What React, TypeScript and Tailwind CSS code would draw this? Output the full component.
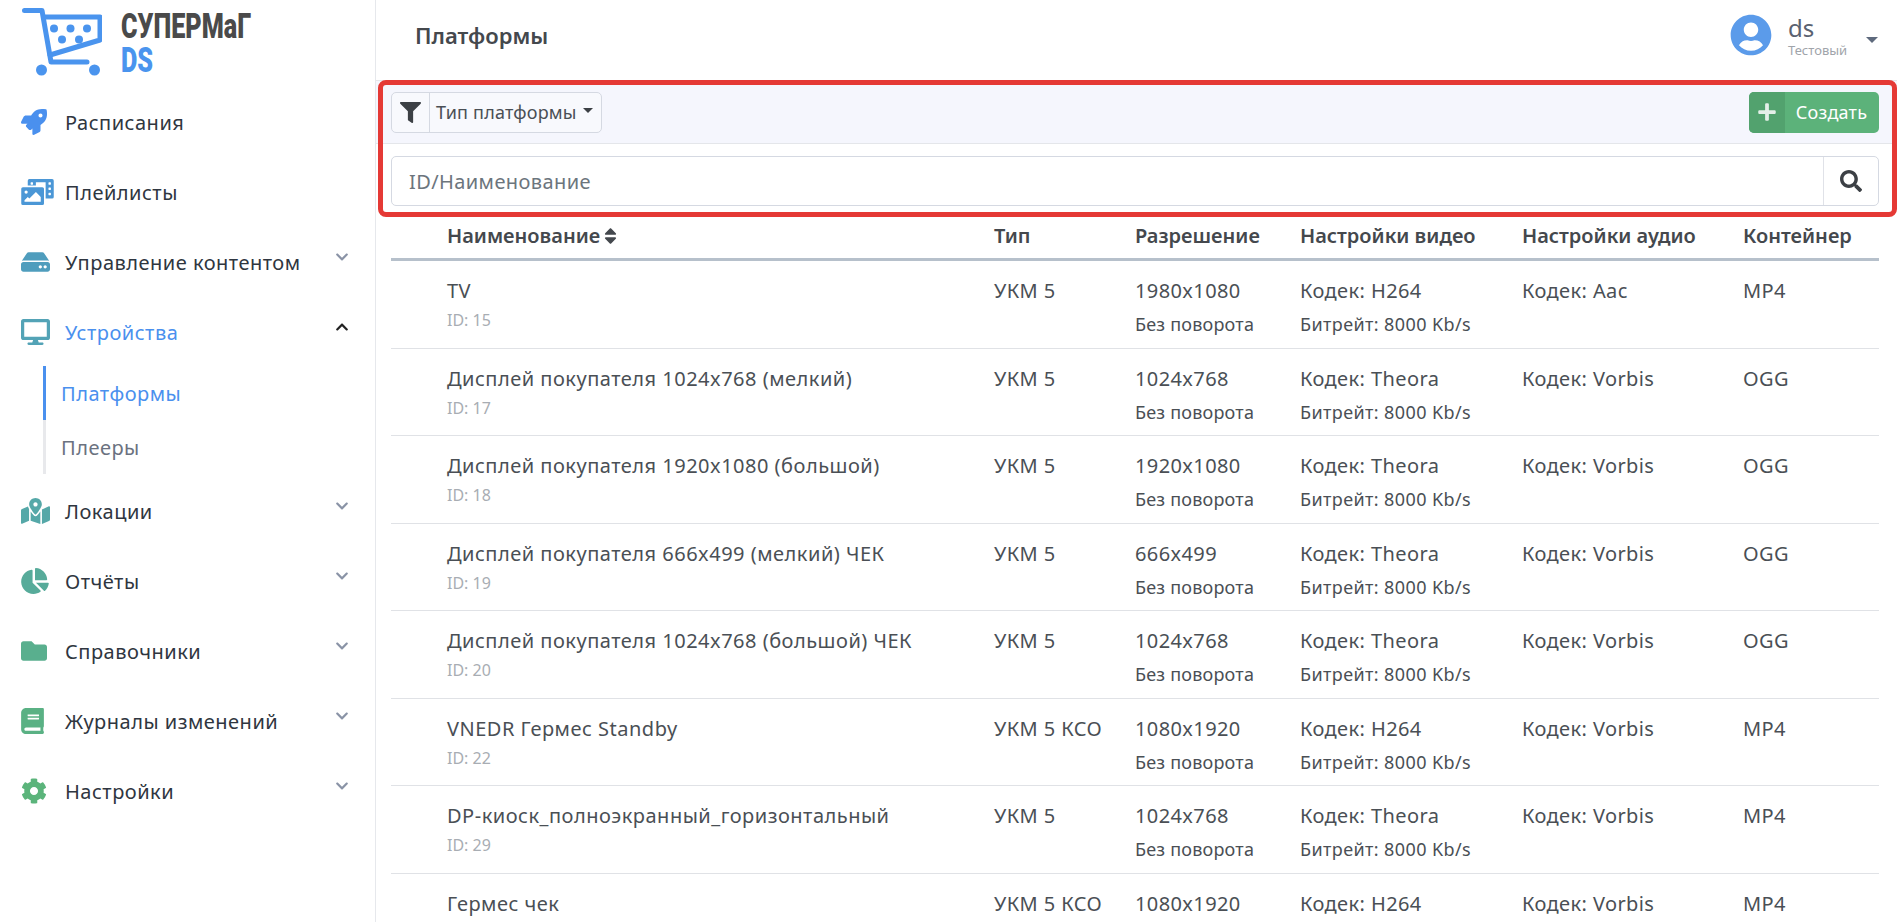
import {
  FaBook,
  FaChartPie,
  FaChevronDown,
  FaChevronUp,
  FaCog,
  FaDesktop,
  FaFilter,
  FaFolder,
  FaHdd,
  FaMapMarkedAlt,
  FaPhotoVideo,
  FaPlus,
  FaRocket,
  FaSearch,
  FaSort,
  FaUserCircle,
} from "react-icons/fa";
import type { IconType } from "react-icons";

type Item = { label: string; icon: IconType; iconClass: string; chevron?: boolean };

const topItems: Item[] = [
  { label: "Расписания", icon: FaRocket, iconClass: "w-[26px] text-[#4a90ee]" },
  { label: "Плейлисты", icon: FaPhotoVideo, iconClass: "w-[33px] text-[#4b97d6]" },
  { label: "Управление контентом", icon: FaHdd, iconClass: "w-[29px] text-[#4f9dbd]", chevron: true },
];

const bottomItems: Item[] = [
  { label: "Локации", icon: FaMapMarkedAlt, iconClass: "w-[29px] text-[#55a8a8]", chevron: true },
  { label: "Отчёты", icon: FaChartPie, iconClass: "w-[28px] text-[#57ab9a]", chevron: true },
  { label: "Справочники", icon: FaFolder, iconClass: "w-[26px] text-[#59af8e]", chevron: true },
  { label: "Журналы изменений", icon: FaBook, iconClass: "w-[23px] text-[#5ab184]", chevron: true },
  { label: "Настройки", icon: FaCog, iconClass: "w-[26px] text-[#5bb47b]", chevron: true },
];

const rows = [
  { name: "TV", id: 15, type: "УКМ 5", res: "1980x1080", video: "H264", audio: "Aac", box: "MP4" },
  { name: "Дисплей покупателя 1024x768 (мелкий)", id: 17, type: "УКМ 5", res: "1024x768", video: "Theora", audio: "Vorbis", box: "OGG" },
  { name: "Дисплей покупателя 1920x1080 (большой)", id: 18, type: "УКМ 5", res: "1920x1080", video: "Theora", audio: "Vorbis", box: "OGG" },
  { name: "Дисплей покупателя 666x499 (мелкий) ЧЕК", id: 19, type: "УКМ 5", res: "666x499", video: "Theora", audio: "Vorbis", box: "OGG" },
  { name: "Дисплей покупателя 1024x768 (большой) ЧЕК", id: 20, type: "УКМ 5", res: "1024x768", video: "Theora", audio: "Vorbis", box: "OGG" },
  { name: "VNEDR Гермес Standby", id: 22, type: "УКМ 5 КСО", res: "1080x1920", video: "H264", audio: "Vorbis", box: "MP4" },
  { name: "DP-киоск_полноэкранный_горизонтальный", id: 29, type: "УКМ 5", res: "1024x768", video: "Theora", audio: "Vorbis", box: "MP4" },
  { name: "Гермес чек", type: "УКМ 5 КСО", res: "1080x1920", video: "H264", audio: "Vorbis", box: "MP4" },
];

const gridCols = "grid grid-cols-[603px_141px_165px_222px_221px_136px]";
const bodyText = "text-[20px] tracking-[0.4px]";
const menuText = "pt-[1px] text-[20px] tracking-[0.5px]";
const smallText = "text-[18px] tracking-[0.2px]";

function Logo() {
  return (
    <div className="flex h-[87px] pl-[22px] pt-[8px]">
      <svg width="80" height="70" viewBox="22 8 80 70" fill="none" stroke="#4a94ee" strokeWidth="5" strokeLinecap="round" strokeLinejoin="round">
        <path d="M24.5 10.5H42L51 62H87" />
        <path d="M44 17H100V40L50 55" />
        <g fill="#4a94ee" stroke="none">
          <circle cx="41.5" cy="70" r="5.5" />
          <circle cx="94.5" cy="70" r="5.5" />
          <circle cx="54" cy="28.5" r="4" />
          <circle cx="70.5" cy="28.5" r="4" />
          <circle cx="87" cy="28.5" r="4" />
          <circle cx="62" cy="39.5" r="4" />
          <circle cx="79" cy="39.5" r="4" />
        </g>
      </svg>
      <div className="ml-[19px] flex flex-col font-['Roboto',sans-serif] font-black">
        <span className="mt-[1px] origin-left scale-x-[0.72] whitespace-nowrap text-[35px] leading-[36px] text-[#4a4a4a]">СУПЕРМаГ</span>
        <span className="origin-left scale-x-[0.72] text-[35px] leading-[32px] text-[#4a94ee]">DS</span>
      </div>
    </div>
  );
}

function MenuItem({ item }: { item: Item }) {
  const Icon = item.icon;
  return (
    <div className="flex h-[70px] items-center pl-[21px] pr-[26px]">
      <span className="flex w-[44px]">
        <Icon className={`h-[26px] shrink-0 ${item.iconClass}`} />
      </span>
      <span className={`flex-1 ${menuText} text-[#2f3640]`}>{item.label}</span>
      {item.chevron && <FaChevronDown className="mb-[10px] h-[14px] w-[14px] text-[#8a93a6]" />}
    </div>
  );
}

function Sidebar() {
  return (
    <aside className="w-[376px] shrink-0 border-r border-[#e6e8ec] bg-white">
      <Logo />
      {topItems.map((item) => (
        <MenuItem key={item.label} item={item} />
      ))}
      <div className="flex h-[70px] items-center pl-[21px] pr-[26px]">
        <span className="flex w-[44px]">
          <FaDesktop className="h-[26px] w-[29px] shrink-0 text-[#53a3b6]" />
        </span>
        <span className={`flex-1 ${menuText} text-[#4a90ee]`}>Устройства</span>
        <FaChevronUp className="mb-[10px] h-[14px] w-[14px] text-[#222]" />
      </div>
      <div className="mb-[2px] ml-[43px] mt-[-1px] border-l-[3px] border-[#e8e9ec]">
        <div className={`relative flex h-[54px] items-center pl-[15px] ${menuText} text-[#4a90ee]`}>
          <span className="absolute bottom-0 left-[-3px] top-0 w-[3px] bg-[#4a90ee]" />
          Платформы
        </div>
        <div className={`flex h-[54px] items-center pl-[15px] ${menuText} text-[#6b7280]`}>Плееры</div>
      </div>
      {bottomItems.map((item) => (
        <MenuItem key={item.label} item={item} />
      ))}
    </aside>
  );
}

function Toolbar() {
  return (
    <div className="relative h-[132px] bg-white">
      <div className="flex h-[64px] items-center justify-between border-y border-[#e4e6ea] bg-[#f5f6fd] pl-[15px] pr-[18px]">
        <div className={`flex h-[41px] items-stretch rounded-[5px] border border-[#d5d9e2] bg-[#f8f9fd] ${smallText} text-[#4a4f55]`}>
          <span className="flex w-[38px] items-center justify-center border-r border-[#d5d9e2]">
            <FaFilter className="h-[21px] w-[21px] text-[#3c4045]" />
          </span>
          <span className="flex items-center pl-[6px] pr-[8px]">
            Тип платформы
            <span className="mb-[3px] ml-[6px] border-x-[5px] border-t-[5px] border-x-transparent border-t-[#3c4045]" />
          </span>
        </div>
        <button className={`flex h-[41px] w-[130px] items-stretch overflow-hidden rounded-[5px] bg-[#5cb27a] ${smallText} text-white`}>
          <span className="flex w-[36px] items-center justify-center bg-[#52a26e]">
            <FaPlus className="h-[20px] w-[20px] text-[#e4efe8]" />
          </span>
          <span className="flex flex-1 items-center justify-center pr-[1px]">Создать</span>
        </button>
      </div>
      <div className="pl-[15px] pr-[18px] pt-[12px]">
        <div className={`flex h-[50px] items-stretch rounded-[5px] border border-[#d5d9e2] bg-white ${bodyText}`}>
          <input placeholder="ID/Наименование" className="min-w-0 flex-1 bg-transparent pl-[17px] pt-[2px] outline-none placeholder:text-[#6c757d]" />
          <span className="flex w-[55px] items-center justify-center border-l border-[#e0e2e8]">
            <FaSearch className="h-[22px] w-[22px] text-[#3c4045]" />
          </span>
        </div>
      </div>
      {/* red annotation frame on top of the screenshot */}
      <div className="pointer-events-none absolute bottom-[-5px] left-[2px] right-0 top-0 rounded-[8px] border-[5px] border-[#e53935]" />
    </div>
  );
}

function PlatformTable() {
  return (
    <div className="ml-[15px] mr-[18px] mt-[5px] text-[#4a4f55]">
      <div className={`${gridCols} h-[44px] items-center border-b-[3px] border-[#b6c0cb] pb-[4px] text-[20px] font-semibold text-[#44484d]`}>
        <span className="flex items-center gap-[4px] pl-[56px]">
          Наименование <FaSort className="h-[20px] w-[13px]" />
        </span>
        <span>Тип</span>
        <span>Разрешение</span>
        <span>Настройки видео</span>
        <span>Настройки аудио</span>
        <span>Контейнер</span>
      </div>
      {rows.map((row) => (
        <div key={row.name} className={`${gridCols} h-[87.5px] border-b border-[#e0e2e6] pt-[17px] leading-[26px] ${bodyText}`}>
          <div className="pl-[56px] tracking-[0.5px]">
            <div>{row.name}</div>
            {row.id && <div className="mt-[3px] text-[16px] tracking-normal text-[#a8adb3]">ID: {row.id}</div>}
          </div>
          <div>{row.type}</div>
          <div>
            <div>{row.res}</div>
            <div className={`mt-[7px] ${smallText}`}>Без поворота</div>
          </div>
          <div>
            <div>Кодек: {row.video}</div>
            <div className="mt-[7px] text-[18px] tracking-[0.4px]">Битрейт: 8000 Kb/s</div>
          </div>
          <div>Кодек: {row.audio}</div>
          <div>{row.box}</div>
        </div>
      ))}
    </div>
  );
}

export default function App() {
  return (
    <div className="flex h-screen overflow-hidden bg-white font-['Noto_Sans',sans-serif]">
      <Sidebar />
      <main className="min-w-0 flex-1">
        <header className="flex h-[80px] items-center justify-between pl-[39px] pr-[19px]">
          <h1 className="mb-[10px] text-[22px] font-semibold text-[#44484d]">Платформы</h1>
          <div className="flex items-center">
            <FaUserCircle className="mb-[11px] h-[42px] w-[42px] text-[#5b9bea]" />
            <div className="mb-[9px] ml-[16px] flex w-[78px] flex-col">
              <span className="text-[24px] leading-[28px] text-[#5a6270]">ds</span>
              <span className="text-[13px] leading-[16px] text-[#a0a4aa]">Тестовый</span>
            </div>
            <span className="border-x-[6px] border-t-[6px] border-x-transparent border-t-[#5e6a7d]" />
          </div>
        </header>
        <Toolbar />
        <PlatformTable />
      </main>
    </div>
  );
}
